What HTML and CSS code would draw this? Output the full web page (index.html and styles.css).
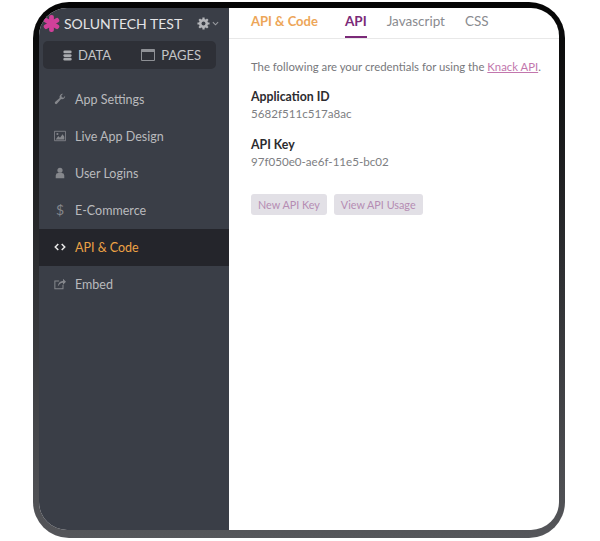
FILE: index.html
```html
<!DOCTYPE html>
<html lang="en">

<head>
  <title>API & Code</title>
  <meta charset="UTF-8" />
  <link rel="stylesheet" href="styles.css">
</head>

<body>
  <div class="device">
    <div class="screen">
      <aside class="sidebar">
        <div class="brand">
          <svg class="logo" viewBox="0 0 20 20"><g fill="#d0409a"><rect x="7.2" y="0" width="5.6" height="20" rx="2.4"/><rect x="7.2" y="0" width="5.6" height="20" rx="2.4" transform="rotate(60 10 10)"/><rect x="7.2" y="0" width="5.6" height="20" rx="2.4" transform="rotate(120 10 10)"/></g></svg>
          <span class="brand-name">SOLUNTECH TEST</span>
          <svg class="gear" viewBox="0 0 14 14"><circle cx="7" cy="7" r="3.6" fill="none" stroke="#b4b6ba" stroke-width="2.6"/><g stroke="#b4b6ba" stroke-width="2.4"><path d="M7 0.5v13M0.5 7h13M2.4 2.4l9.2 9.2M11.6 2.4l-9.2 9.2"/></g><circle cx="7" cy="7" r="2.1" fill="#3a3e47"/></svg>
          <svg class="caret" viewBox="0 0 8 5"><path d="M1 1l3 3 3-3" fill="none" stroke="#9a9ca1" stroke-width="1.2"/></svg>
        </div>
        <div class="switch">
          <span class="switch-item">
            <svg class="switch-icon" viewBox="0 0 12 12"><g fill="#a9abaf"><rect x="1.5" y="0.5" width="9" height="3" rx="1.4"/><rect x="1.5" y="4.5" width="9" height="3" rx="1.4"/><rect x="1.5" y="8.5" width="9" height="3" rx="1.4"/></g></svg>
            DATA
          </span>
          <span class="switch-item">
            <svg class="switch-icon pages" viewBox="0 0 14 12"><path d="M.5.5h13v11H.5z" fill="none" stroke="#8e9095"/><path d="M.5.5h13v2.5H.5z" fill="#8e9095"/></svg>
            PAGES
          </span>
        </div>
        <nav class="menu">
          <a class="menu-item">
            <svg class="menu-icon" viewBox="0 0 14 14"><path d="M13 3.2a3.6 3.6 0 0 1-4.7 3.9L3.4 12.6a1.5 1.5 0 0 1-2.2-2L6.600 5.700A3.600 3.600 0 0 1 10.600 1L8.600 3l.5 2 2 .5z" fill="#85878c"/></svg>
            App Settings
          </a>
          <a class="menu-item">
            <svg class="menu-icon" viewBox="0 0 14 12"><path d="M.5.5h13v11H.5z" fill="#3a3e47" stroke="#85878c"/><path d="M2 10l3-4 2 2 3-4 2 3v3z" fill="#85878c"/><circle cx="4" cy="3.600" r="1.200" fill="#85878c"/></svg>
            Live App Design
          </a>
          <a class="menu-item">
            <svg class="menu-icon" viewBox="0 0 14 14"><circle cx="7" cy="3.800" r="3" fill="#85878c"/><path d="M2 13v-3.200a3 3 0 0 1 3-2.800h4a3 3 0 0 1 3 2.800V13z" fill="#85878c"/></svg>
            User Logins
          </a>
          <a class="menu-item">
            <span class="menu-icon dollar">$</span>
            E-Commerce
          </a>
          <a class="menu-item active">
            <svg class="menu-icon" viewBox="0 0 14 10"><path d="M5 1.500L1.500 5 5 8.500M9 1.500L12.500 5 9 8.500" fill="none" stroke="#e6e6e6" stroke-width="1.800"/></svg>
            API &amp; Code
          </a>
          <a class="menu-item">
            <svg class="menu-icon" viewBox="0 0 14 14"><path d="M10.500 8v4.500H1V3.500H6" fill="none" stroke="#85878c" stroke-width="1.200"/><path d="M4.500 10c.3-4 2.700-6.500 6-6.500V1L14 4.500 10.500 8V5.500C8 5.500 6 7 4.500 10z" fill="#85878c"/></svg>
            Embed
          </a>
        </nav>
      </aside>
      <main class="content">
        <header class="tabs">
          <span class="tabs-title">API &amp; Code</span>
          <span class="tab current">API</span>
          <span class="tab">Javascript</span>
          <span class="tab">CSS</span>
        </header>
        <section class="panel">
          <p class="intro">The following are your credentials for using the <a class="link">Knack API</a>.</p>
          <div class="field">
            <div class="label">Application ID</div>
            <div class="value">5682f511c517a8ac</div>
          </div>
          <div class="field">
            <div class="label">API Key</div>
            <div class="value">97f050e0-ae6f-11e5-bc02</div>
          </div>
          <div class="buttons">
            <span class="btn">New API Key</span>
            <span class="btn">View API Usage</span>
          </div>
        </section>
      </main>
    </div>
  </div>
</body>

</html>
```

FILE: styles.css
```css
body {
  margin: 0;
  background-color: #fff;
  font-family: 'Lato', sans-serif;
}

.device {
  width: 532px;
  height: 536px;
  margin: 2px 0 0 33px;
  padding: 6px 6px 8px 6px;
  box-sizing: border-box;
  border-radius: 36px;
  background: linear-gradient(#050505 0%, #2e2f32 50%, #55565a 100%);
}

.screen {
  display: flex;
  height: 100%;
  border-radius: 28px;
  overflow: hidden;
  background-color: #fff;
}

.sidebar {
  width: 190px;
  flex-shrink: 0;
  background-color: #3a3e47;
  color: #c4c5c8;
}

.brand {
  display: flex;
  align-items: center;
  height: 33px;
  padding: 0 0 3px 4px;
  box-sizing: border-box;
}

.logo {
  width: 17px;
  height: 19px;
}

.brand-name {
  margin-left: 4px;
  font-size: 14px;
  color: #e4e4e6;
}

.gear {
  width: 13px;
  height: 13px;
  margin-left: 15px;
}

.caret {
  width: 7px;
  height: 5px;
  margin-left: 2px;
}

.switch {
  display: flex;
  justify-content: space-between;
  align-items: center;
  height: 28px;
  margin: 0 13px 0 4px;
  padding: 0 15px 0 19px;
  border-radius: 5px;
  background-color: #2e3037;
  font-size: 13px;
  color: #c4c5c8;
}

.switch-item {
  display: flex;
  align-items: center;
  gap: 5px;
}

.switch-icon {
  width: 11px;
  height: 11px;
}

.switch-icon.pages {
  width: 14px;
  height: 12px;
  margin-right: 1px;
}

.menu {
  margin-top: 12px;
}

.menu-item {
  display: flex;
  align-items: center;
  height: 37px;
  padding: 0 0 1px 15px;
  box-sizing: border-box;
  font-size: 12.5px;
  color: #b9babd;
}

.menu-item.active {
  background-color: #24252b;
  color: #eda245;
}

.menu-icon {
  width: 12px;
  height: 12px;
  margin-right: 9px;
  flex-shrink: 0;
}

.dollar {
  font-size: 14px;
  line-height: 12px;
  text-align: center;
  color: #85878c;
}

.content {
  flex: 1;
  color: #77787c;
}

.tabs {
  display: flex;
  align-items: flex-start;
  height: 31px;
  box-sizing: border-box;
  border-bottom: 1px solid #e8e8e8;
  font-size: 13.5px;
  padding-left: 22px;
}

.tabs-title {
  margin-right: 27px;
  font-size: 13px;
  font-weight: 700;
  color: #eda658;
  line-height: 27px;
}

.tab {
  margin-right: 20px;
  height: 30px;
  box-sizing: border-box;
  line-height: 27px;
  color: #8a8b8f;
}

.tab.current {
  font-weight: 700;
  color: #7b2a78;
  border-bottom: 2px solid #7b2a78;
}

.panel {
  padding: 19px 0 0 22px;
}

.intro {
  margin: 0 0 13px;
  font-size: 11.35px;
  line-height: 17px;
  white-space: nowrap;
}

.link {
  color: #c276ad;
  text-decoration: underline;
}

.field {
  margin-bottom: 14px;
}

.label {
  font-size: 12.3px;
  line-height: 17px;
  font-weight: 700;
  color: #2b2b2f;
}

.value {
  font-size: 11.6px;
  line-height: 17px;
  color: #7d7e82;
}

.buttons {
  display: flex;
  gap: 7px;
  margin-top: 24px;
}

.btn {
  height: 21px;
  padding: 0 7px;
  border-radius: 3px;
  background-color: #e2e0e6;
  font-size: 10.8px;
  line-height: 21px;
  color: #b58cb3;
}
```
